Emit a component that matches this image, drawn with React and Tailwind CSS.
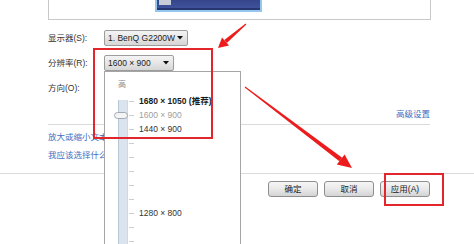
import React from "react";

const font = "font-['Liberation_Sans','Noto_Sans_CJK_SC',sans-serif]";

function Dropdown({ text, width }) {
  return (
    <div
      className={`h-[16px] ${width} flex items-center justify-between pl-[3px] pr-[4px] border border-[#9c9c9c] rounded-[2px] bg-gradient-to-b from-[#f4f4f4] via-[#e6e6e6] to-[#d6d6d6] text-[8.5px] text-[#222] leading-none`}
    >
      <span>{text}</span>
      <svg width="6" height="4" viewBox="0 0 6 4">
        <path d="M0 0 L6 0 L3 3.5 Z" fill="#111" />
      </svg>
    </div>
  );
}

function Button({ children }) {
  return (
    <div className="w-[50px] h-[16px] flex items-center justify-center border border-[#8e8e8e] rounded-[3px] bg-gradient-to-b from-[#f6f6f6] via-[#e9e9e9] to-[#d4d4d4] text-[8.5px] text-[#222] leading-none">
      {children}
    </div>
  );
}

function Slider() {
  const ticks = [];
  for (let i = 0; i < 11; i++) ticks.push(7 + i * 14);
  return (
    <svg className="ml-[8px] w-[22px] h-[160px] shrink-0" viewBox="0 0 22 160">
      <rect x="5" y="6" width="10" height="160" fill="#dbe4ee" />
      <rect x="5" y="6" width="1" height="160" fill="#b9c6d4" />
      <rect x="14" y="6" width="1" height="160" fill="#cfd9e4" />
      {ticks.map((y) => (
        <rect key={y} x="16" y={y} width="5" height="0.8" fill="#b8c4d0" />
      ))}
      <rect x="1.5" y="18.5" width="13" height="6" rx="3" fill="#f4f4f4" stroke="#8e98a4" strokeWidth="0.8" />
    </svg>
  );
}

export default function App() {
  return (
    <div className={`relative w-[474px] h-[244px] overflow-hidden bg-white text-[#333] ${font}`}>
      {/* preview box */}
      <div className="ml-[48px] w-[383px] h-[20px] border-x border-b border-[#c9c9c9]">
        <div className="relative ml-[106px] w-[107px] h-[12px] border-x-2 border-b-2 border-[#94c6ee] bg-gradient-to-b from-[#35468c] to-[#41559e]">
          <div className="absolute left-[2px] top-0 w-[12px] h-[5px] bg-[#c8ccd8]" />
          <div className="absolute left-0 right-0 bottom-0 h-[2px] bg-[#2a3672]" />
        </div>
      </div>

      <div className="ml-[48px] w-[382px]">
        <div className="mt-[10px] h-[16px] flex items-center">
          <div className="w-[56px] text-[8.5px] leading-none">显示器(S):</div>
          <Dropdown text="1. BenQ G2200W" width="w-[84px]" />
        </div>
        <div className="mt-[9px] h-[16px] flex items-center">
          <div className="w-[56px] text-[8.5px] leading-none">分辨率(R):</div>
          <Dropdown text="1600 × 900" width="w-[70px]" />
        </div>
        <div className="mt-[9px] h-[16px] flex items-center">
          <div className="w-[56px] text-[8.5px] leading-none">方向(O):</div>
        </div>
        <div className="mt-[12px] h-[12px] flex items-center justify-end text-[8.5px] leading-none text-[#3f6fc2]">
          高级设置
        </div>
        <div className="mt-[4px] h-px bg-[#dadada]" />
        <div className="mt-[6px] h-[12px] flex items-center text-[8.5px] leading-none text-[#3f6fc2] whitespace-nowrap">
          放大或缩小文本和其他项目
        </div>
        <div className="mt-[6px] h-[12px] flex items-center text-[8.5px] leading-none text-[#3f6fc2] whitespace-nowrap">
          我应该选择什么显示器设置?
        </div>
      </div>
      <div className="mt-[12px] h-px bg-[#dadada]" />
      <div className="mt-[7px] flex justify-end gap-[6px] pr-[44px]">
        <Button>确定</Button>
        <Button>取消</Button>
        <Button>应用(A)</Button>
      </div>

      {/* dropdown list popup */}
      <div className="absolute left-[104px] top-[71px] w-[137px] h-[190px] border border-[#a5a5a5] bg-white">
        <div className="pl-[13px] mt-[7px] h-[12px] flex items-center text-[8px] leading-none text-[#8a8a8a]">高</div>
        <div className="flex mt-[3px]">
          <Slider />
          <div className="ml-[4px] w-[72px] overflow-hidden whitespace-nowrap flex flex-col text-[8.5px] leading-none">
            <div className="h-[14px] flex items-center font-bold text-[#1a1a1a]">1680 × 1050 (推荐)</div>
            <div className="h-[14px] flex items-center text-[#a0a0a0]">1600 × 900</div>
            <div className="h-[14px] flex items-center text-[#333]">1440 × 900</div>
            <div className="mt-[70px] h-[14px] flex items-center text-[#333]">1280 × 800</div>
          </div>
        </div>
      </div>

      {/* red annotation boxes */}
      <div className="absolute left-[93px] top-[48px] w-[120px] h-[91px] border-2 border-[#e3262b]" />
      <div className="absolute left-[384px] top-[173px] w-[60px] h-[33px] border-2 border-[#e3262b]" />

      {/* red arrows */}
      <svg className="absolute left-0 top-0 w-[474px] h-[244px] pointer-events-none" viewBox="0 0 474 244">
        <polygon
          points="245.7,23.6 246.3,24.4 226.9,43 224.3,40"
          fill="#ec1c1c"
        />
        <polygon points="218,48 229,45.5 222,37.5" fill="#ec1c1c" />
        <polygon
          points="244.7,87.4 245.3,86.6 342.2,157.7 339.4,161.3"
          fill="#ec1c1c"
        />
        <polygon points="352,168 336.8,164.6 344.6,154.4" fill="#ec1c1c" />
      </svg>
    </div>
  );
}
